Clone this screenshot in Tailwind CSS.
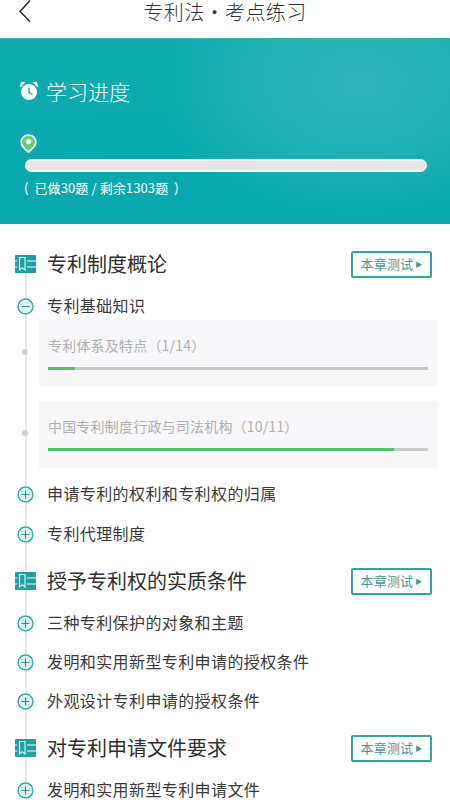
<!doctype html>
<html lang="zh">
<head>
<meta charset="utf-8">
<script src="https://cdn.jsdelivr.net/npm/@tailwindcss/browser@4"></script>
</head>
<body class="bg-white">
<div class="w-[450px] h-[800px] overflow-hidden bg-white text-[#2b2b2b] font-['Noto_Sans_CJK_SC','Noto_Sans',sans-serif]">
  <header class="relative h-[38px] flex justify-center">
    <svg class="absolute left-[18px] top-0" width="14" height="23" viewBox="0 0 14 23" fill="none" stroke="#222" stroke-width="1.4"><path d="M12 0.5 L2 11.5 L12 21.5"/></svg>
    <span class="text-[20px] leading-[24px] font-light text-[#333] whitespace-nowrap tracking-[0.4px]">专利法·考点练习</span>
  </header>

  <section class="h-[186px] border-t border-[#3fb5ad] pl-[19px] pr-[23px] flex flex-col bg-[radial-gradient(ellipse_200px_140px_at_80%_25%,rgba(255,255,255,0.14),rgba(255,255,255,0.07)_60%,transparent_100%),linear-gradient(175deg,#0fabae_0%,#08a8af_100%)]">
    <div class="flex items-center gap-[7px] mt-[38px] h-[28px]">
      <svg width="20" height="20" viewBox="0 0 20 20">
        <circle cx="10" cy="11" r="8" fill="#fff"/>
        <path d="M1.2 5.5 L5 1.8 L2.8 1.5 Z M18.8 5.5 L15 1.8 L17.2 1.5 Z" fill="#fff" stroke="#fff" stroke-width="1.2"/>
        <path d="M10 6.5 V11.5 L13.5 13.5" fill="none" stroke="#2aa9a8" stroke-width="1.4"/>
      </svg>
      <span class="text-[21px] leading-[28px] text-white font-light">学习进度</span>
    </div>
    <svg class="mt-[29px] ml-[1px]" width="17" height="19" viewBox="0 0 18 20">
      <path d="M9 1 C4.5 1 1.2 4.3 1.2 8.4 C1.2 12.5 5.5 16.4 9 19 C12.5 16.4 16.8 12.5 16.8 8.4 C16.8 4.3 13.5 1 9 1 Z" fill="#6ecb74" stroke="#f0faf6" stroke-width="1.8"/>
      <circle cx="9" cy="8" r="2.8" fill="#eef9f2"/>
    </svg>
    <div class="ml-[6px] mt-[6px] h-[13px] w-[402px] rounded-full bg-[#e6e6e6] border-[2.5px] border-[#f6fbfb]"></div>
    <p class="ml-[5px] mt-[8px] text-[13px] leading-[16px] text-white whitespace-nowrap tracking-[0.1px]">(&nbsp; 已做30题 / 剩余1303题 &nbsp;)</p>
  </section>

  <main class="relative pt-[26px] pl-[17px] pr-[18px]">
    <div class="absolute left-[25px] top-[40px] h-[520px] w-[1.5px] bg-[#e8e8ea]"></div>

    <div class="relative flex items-center h-[28px] -ml-[2px]">
      <svg width="21" height="18" viewBox="0 0 21 18"><rect width="21" height="18" rx="1" fill="#1f9fa3"/><path d="M4.5 2.5 H10 V15 L7.2 12.8 L4.5 15 Z" fill="none" stroke="#d5f0ef" stroke-width="1.2"/><path d="M12 6 H21 M12 12 H21 M0 6 H2 M0 12 H2" stroke="#fff" stroke-width="1.2"/></svg>
      <h2 class="ml-[11px] text-[20px] leading-[28px] font-normal text-[#2f2f2f]">专利制度概论</h2>
      <a class="ml-auto flex items-center justify-center w-[81px] h-[27px] border-2 border-[#36a5a0] rounded-[2px] text-[13px] text-[#3f9a98] tracking-[0.2px]">本章测试<span class="ml-[2px] text-[7px]">▶</span></a>
    </div>

    <div class="relative flex items-center h-[28px] mt-[14px]">
      <svg class="bg-white rounded-full" width="17" height="17" viewBox="0 0 17 17"><circle cx="8.5" cy="8.5" r="7.5" fill="#dcf6f3" stroke="#2aa9a3" stroke-width="1.5"/><path d="M4.5 8.5 H12.5" stroke="#2f8f8b" stroke-width="1.2"/></svg>
      <span class="ml-[13px] -mt-[2px] text-[16px] leading-[22px] tracking-[0.4px] text-[#3a3a3a]">专利基础知识</span>
    </div>

    <div class="relative h-[67px] ml-[22px] -mr-[5px] bg-[#f7f7f9] pl-[9px] pr-[9px] pt-[15px]">
      <span class="absolute -left-[17px] top-[29px] w-[6px] h-[6px] rounded-full bg-[#cfcfcf]"></span>
      <p class="text-[14px] leading-[20px] tracking-[0.2px] text-[#b0b0b0]">专利体系及特点（1/14）</p>
      <div class="mt-[12px] h-[3px] bg-[#c8c8c8]"><div class="h-full w-[27px] bg-[#52c46b]"></div></div>
    </div>

    <div class="relative h-[67px] mt-[14px] ml-[22px] -mr-[5px] bg-[#f7f7f9] pl-[9px] pr-[9px] pt-[15px]">
      <span class="absolute -left-[17px] top-[29px] w-[6px] h-[6px] rounded-full bg-[#cfcfcf]"></span>
      <p class="text-[14px] leading-[20px] tracking-[0.2px] text-[#b0b0b0]">中国专利制度行政与司法机构（10/11）</p>
      <div class="mt-[12px] h-[3px] bg-[#c8c8c8]"><div class="h-full w-[346px] bg-[#52c46b]"></div></div>
    </div>

    <div class="relative flex items-center h-[28px] mt-[12px]">
      <svg class="bg-white rounded-full" width="17" height="17" viewBox="0 0 17 17"><circle cx="8.5" cy="8.5" r="7.5" fill="#dcf6f3" stroke="#2aa9a3" stroke-width="1.5"/><path d="M4.5 8.5 H12.5 M8.5 4.5 V12.5" stroke="#2f8f8b" stroke-width="1.2"/></svg>
      <span class="ml-[13px] -mt-[2px] text-[16px] leading-[22px] tracking-[0.4px] text-[#3a3a3a]">申请专利的权利和专利权的归属</span>
    </div>
    <div class="relative flex items-center h-[28px] mt-[12px]">
      <svg class="bg-white rounded-full" width="17" height="17" viewBox="0 0 17 17"><circle cx="8.5" cy="8.5" r="7.5" fill="#dcf6f3" stroke="#2aa9a3" stroke-width="1.5"/><path d="M4.5 8.5 H12.5 M8.5 4.5 V12.5" stroke="#2f8f8b" stroke-width="1.2"/></svg>
      <span class="ml-[13px] -mt-[2px] text-[16px] leading-[22px] tracking-[0.4px] text-[#3a3a3a]">专利代理制度</span>
    </div>

    <div class="relative flex items-center h-[28px] mt-[19px] -ml-[2px]">
      <svg width="21" height="18" viewBox="0 0 21 18"><rect width="21" height="18" rx="1" fill="#1f9fa3"/><path d="M4.5 2.5 H10 V15 L7.2 12.8 L4.5 15 Z" fill="none" stroke="#d5f0ef" stroke-width="1.2"/><path d="M12 6 H21 M12 12 H21 M0 6 H2 M0 12 H2" stroke="#fff" stroke-width="1.2"/></svg>
      <h2 class="ml-[11px] text-[20px] leading-[28px] font-normal text-[#2f2f2f]">授予专利权的实质条件</h2>
      <a class="ml-auto flex items-center justify-center w-[81px] h-[27px] border-2 border-[#36a5a0] rounded-[2px] text-[13px] text-[#3f9a98] tracking-[0.2px]">本章测试<span class="ml-[2px] text-[7px]">▶</span></a>
    </div>

    <div class="relative flex items-center h-[28px] mt-[14px]">
      <svg class="bg-white rounded-full" width="17" height="17" viewBox="0 0 17 17"><circle cx="8.5" cy="8.5" r="7.5" fill="#dcf6f3" stroke="#2aa9a3" stroke-width="1.5"/><path d="M4.5 8.5 H12.5 M8.5 4.5 V12.5" stroke="#2f8f8b" stroke-width="1.2"/></svg>
      <span class="ml-[13px] -mt-[2px] text-[16px] leading-[22px] tracking-[0.4px] text-[#3a3a3a]">三种专利保护的对象和主题</span>
    </div>
    <div class="relative flex items-center h-[28px] mt-[11px]">
      <svg class="bg-white rounded-full" width="17" height="17" viewBox="0 0 17 17"><circle cx="8.5" cy="8.5" r="7.5" fill="#dcf6f3" stroke="#2aa9a3" stroke-width="1.5"/><path d="M4.5 8.5 H12.5 M8.5 4.5 V12.5" stroke="#2f8f8b" stroke-width="1.2"/></svg>
      <span class="ml-[13px] -mt-[2px] text-[16px] leading-[22px] tracking-[0.4px] text-[#3a3a3a]">发明和实用新型专利申请的授权条件</span>
    </div>
    <div class="relative flex items-center h-[28px] mt-[11px]">
      <svg class="bg-white rounded-full" width="17" height="17" viewBox="0 0 17 17"><circle cx="8.5" cy="8.5" r="7.5" fill="#dcf6f3" stroke="#2aa9a3" stroke-width="1.5"/><path d="M4.5 8.5 H12.5 M8.5 4.5 V12.5" stroke="#2f8f8b" stroke-width="1.2"/></svg>
      <span class="ml-[13px] -mt-[2px] text-[16px] leading-[22px] tracking-[0.4px] text-[#3a3a3a]">外观设计专利申请的授权条件</span>
    </div>

    <div class="relative flex items-center h-[28px] mt-[19px] -ml-[2px]">
      <svg width="21" height="18" viewBox="0 0 21 18"><rect width="21" height="18" rx="1" fill="#1f9fa3"/><path d="M4.5 2.5 H10 V15 L7.2 12.8 L4.5 15 Z" fill="none" stroke="#d5f0ef" stroke-width="1.2"/><path d="M12 6 H21 M12 12 H21 M0 6 H2 M0 12 H2" stroke="#fff" stroke-width="1.2"/></svg>
      <h2 class="ml-[11px] text-[20px] leading-[28px] font-normal text-[#2f2f2f]">对专利申请文件要求</h2>
      <a class="ml-auto flex items-center justify-center w-[81px] h-[27px] border-2 border-[#36a5a0] rounded-[2px] text-[13px] text-[#3f9a98] tracking-[0.2px]">本章测试<span class="ml-[2px] text-[7px]">▶</span></a>
    </div>

    <div class="relative flex items-center h-[24px] mt-[16px]">
      <svg class="bg-white rounded-full" width="17" height="17" viewBox="0 0 17 17"><circle cx="8.5" cy="8.5" r="7.5" fill="#dcf6f3" stroke="#2aa9a3" stroke-width="1.5"/><path d="M4.5 8.5 H12.5 M8.5 4.5 V12.5" stroke="#2f8f8b" stroke-width="1.2"/></svg>
      <span class="ml-[13px] -mt-[2px] text-[16px] leading-[20px] tracking-[0.4px] text-[#3a3a3a]">发明和实用新型专利申请文件</span>
    </div>
  </main>
</div>
</body>
</html>
